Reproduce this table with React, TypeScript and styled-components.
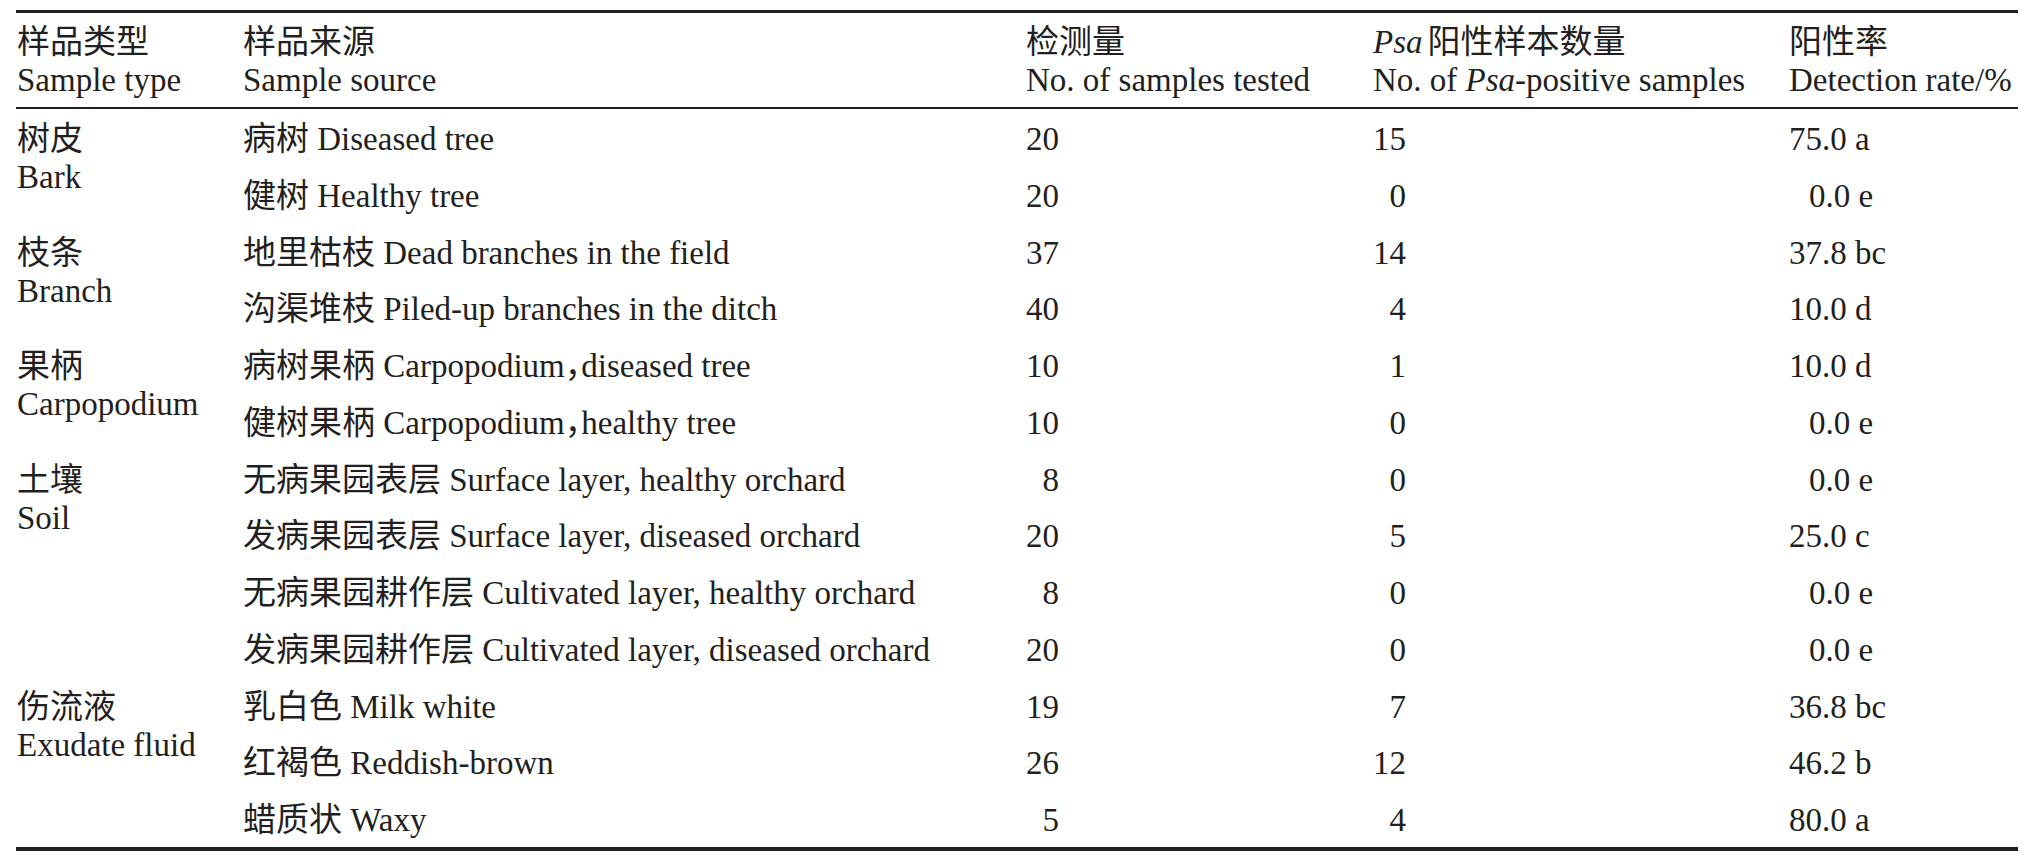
import React from "react";
import styled, { createGlobalStyle } from "styled-components";

const Global = createGlobalStyle`
  html, body {
    margin: 0;
    padding: 0;
    background: #ffffff;
  }
  body {
    font-family: "Liberation Serif", "Noto Sans CJK SC", serif;
    color: #231f20;
  }
`;

const Page = styled.div`
  padding: 10px 0 0 16px;
`;

const Table = styled.table`
  width: 2002px;
  table-layout: fixed;
  border-collapse: separate;
  border-spacing: 0;
  border-top: 3px solid #231f20;
  border-bottom: 4px solid #231f20;
  font-family: "Liberation Serif", "Noto Sans CJK SC", serif;
  font-size: 33px;
  color: #231f20;
`;

const HeadCell = styled.th<{ $first?: boolean }>`
  text-align: left;
  font-weight: normal;
  vertical-align: top;
  padding: 10px 0 8px ${(p) => (p.$first ? "1px" : "0")};
  border-bottom: 2px solid #231f20;
  white-space: nowrap;
`;

const Line = styled.div`
  height: 38px;
  line-height: 38px;
  white-space: nowrap;
`;

const Row = styled.tr`
  height: 56.77px;
`;

const Cell = styled.td<{ $first?: boolean }>`
  vertical-align: top;
  padding: 11px 0 0 ${(p) => (p.$first ? "1px" : "0")};
  white-space: nowrap;
`;

const Num = styled.span<{ $indent: number }>`
  display: inline-block;
  padding-left: ${(p) => p.$indent}px;
`;

const Em = styled.i<{ $gap?: number }>`
  font-style: italic;
  margin-right: ${(p) => p.$gap ?? 0}px;
`;

const Punct = styled.span`
  font-feature-settings: "halt" 1;
`;

type Item = {
  source: string;
  tested: string;
  positive: string;
  rate: string;
};

type Group = {
  zh: string;
  en: string;
  items: Item[];
};

const groups: Group[] = [
  {
    zh: "树皮",
    en: "Bark",
    items: [
      { source: "病树 Diseased tree", tested: "20", positive: "15", rate: "75.0 a" },
      { source: "健树 Healthy tree", tested: "20", positive: "0", rate: "0.0 e" },
    ],
  },
  {
    zh: "枝条",
    en: "Branch",
    items: [
      { source: "地里枯枝 Dead branches in the field", tested: "37", positive: "14", rate: "37.8 bc" },
      { source: "沟渠堆枝 Piled-up branches in the ditch", tested: "40", positive: "4", rate: "10.0 d" },
    ],
  },
  {
    zh: "果柄",
    en: "Carpopodium",
    items: [
      { source: "病树果柄 Carpopodium，diseased tree", tested: "10", positive: "1", rate: "10.0 d" },
      { source: "健树果柄 Carpopodium，healthy tree", tested: "10", positive: "0", rate: "0.0 e" },
    ],
  },
  {
    zh: "土壤",
    en: "Soil",
    items: [
      { source: "无病果园表层 Surface layer, healthy orchard", tested: "8", positive: "0", rate: "0.0 e" },
      { source: "发病果园表层 Surface layer, diseased orchard", tested: "20", positive: "5", rate: "25.0 c" },
      { source: "无病果园耕作层 Cultivated layer, healthy orchard", tested: "8", positive: "0", rate: "0.0 e" },
      { source: "发病果园耕作层 Cultivated layer, diseased orchard", tested: "20", positive: "0", rate: "0.0 e" },
    ],
  },
  {
    zh: "伤流液",
    en: "Exudate fluid",
    items: [
      { source: "乳白色 Milk white", tested: "19", positive: "7", rate: "36.8 bc" },
      { source: "红褐色 Reddish-brown", tested: "26", positive: "12", rate: "46.2 b" },
      { source: "蜡质状 Waxy", tested: "5", positive: "4", rate: "80.0 a" },
    ],
  },
];

const intIndent = (v: string) => (v.length < 2 ? 16.5 : 0);
const rateIndent = (v: string) => (v.split(".")[0].length < 2 ? 20 : 0);

const renderSource = (s: string) => {
  const parts = s.split("，");
  return parts.map((part, i) => (
    <React.Fragment key={i}>
      {part}
      {i < parts.length - 1 && <Punct>，</Punct>}
    </React.Fragment>
  ));
};

export default function App() {
  return (
    <>
      <Global />
      <Page>
        <Table>
          <colgroup>
            <col style={{ width: 227 }} />
            <col style={{ width: 783 }} />
            <col style={{ width: 347 }} />
            <col style={{ width: 416 }} />
            <col style={{ width: 229 }} />
          </colgroup>
          <thead>
            <tr>
              <HeadCell $first>
                <Line>样品类型</Line>
                <Line>Sample type</Line>
              </HeadCell>
              <HeadCell>
                <Line>样品来源</Line>
                <Line>Sample source</Line>
              </HeadCell>
              <HeadCell>
                <Line>检测量</Line>
                <Line>No. of samples tested</Line>
              </HeadCell>
              <HeadCell>
                <Line>
                  <Em $gap={5}>Psa</Em>阳性样本数量
                </Line>
                <Line>
                  No. of <Em>Psa</Em>-positive samples
                </Line>
              </HeadCell>
              <HeadCell>
                <Line>阳性率</Line>
                <Line>Detection rate/%</Line>
              </HeadCell>
            </tr>
          </thead>
          <tbody>
            {groups.map((g) =>
              g.items.map((it, i) => (
                <Row key={g.en + i}>
                  {i === 0 && (
                    <Cell $first rowSpan={g.items.length}>
                      <Line>{g.zh}</Line>
                      <Line>{g.en}</Line>
                    </Cell>
                  )}
                  <Cell>
                    <Line>{renderSource(it.source)}</Line>
                  </Cell>
                  <Cell>
                    <Line>
                      <Num $indent={intIndent(it.tested)}>{it.tested}</Num>
                    </Line>
                  </Cell>
                  <Cell>
                    <Line>
                      <Num $indent={intIndent(it.positive)}>{it.positive}</Num>
                    </Line>
                  </Cell>
                  <Cell>
                    <Line>
                      <Num $indent={rateIndent(it.rate)}>{it.rate}</Num>
                    </Line>
                  </Cell>
                </Row>
              ))
            )}
          </tbody>
        </Table>
      </Page>
    </>
  );
}
